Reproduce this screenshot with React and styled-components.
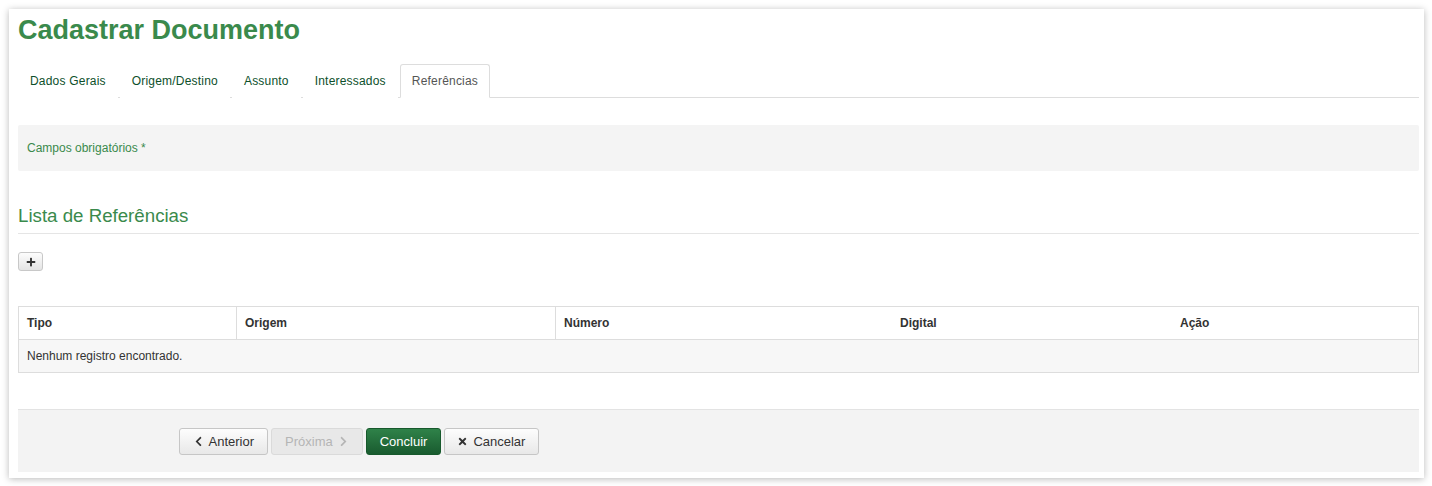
import React from 'react'
import styled, { createGlobalStyle } from 'styled-components'
import { FaChevronLeft, FaChevronRight, FaTimes, FaPlus } from 'react-icons/fa'

const GlobalStyle = createGlobalStyle`
  html, body {
    margin: 0;
    padding: 0;
    background: #fff;
  }
  body {
    font-family: "Liberation Sans", Arial, sans-serif;
    font-size: 12px;
    color: #333;
  }
`

const Page = styled.div`
  padding: 9px 8px 8px 9px;
`

const Card = styled.div`
  width: 1415px;
  box-sizing: border-box;
  background: #fff;
  padding: 9px 5px 6px 9px;
  box-shadow: 0 1px 7px rgba(0, 0, 0, 0.28);
`

const Title = styled.h1`
  margin: 0;
  height: 46px;
  font-size: 27px;
  line-height: 25px;
  font-weight: bold;
  color: #3a8a4c;
`

const Tabs = styled.ul`
  list-style: none;
  margin: 0;
  padding: 0;
  display: flex;
  border-bottom: 1px solid #ddd;
`

const Tab = styled.li`
  margin-right: 2px;
  margin-bottom: -1px;
  padding: 0 11px;
  height: 32px;
  line-height: 32px;
  font-size: 12px;
  letter-spacing: 0.2px;
  border: 1px solid ${p => (p.active ? '#ddd' : 'transparent')};
  border-bottom-color: ${p => (p.active ? '#fff' : 'transparent')};
  border-radius: 3px 3px 0 0;
  background: #fff;
  color: ${p => (p.active ? '#555' : '#0d4f2b')};
`

const Notice = styled.div`
  margin-top: 27px;
  height: 46px;
  display: flex;
  align-items: center;
  padding: 0 9px;
  background: #f4f4f4;
  border-radius: 2px;
  font-size: 12px;
  color: #3a8a4c;
`

const SectionTitle = styled.h2`
  margin: 34px 0 0 0;
  padding-bottom: 6px;
  font-size: 18.7px;
  line-height: 22px;
  font-weight: normal;
  color: #3a8a4c;
  border-bottom: 1px solid #e5e5e5;
`

const AddButton = styled.button`
  display: flex;
  align-items: center;
  justify-content: center;
  margin-top: 18px;
  width: 25px;
  height: 19px;
  padding: 0;
  border: 1px solid #c8c8c8;
  border-radius: 3px;
  background: linear-gradient(#fdfdfd, #e4e4e4);
  color: #333;
  font-size: 10px;
`

const Table = styled.table`
  margin-top: 35px;
  width: 100%;
  border-collapse: collapse;
  font-size: 12px;
  border: 1px solid #ddd;
`

const Th = styled.th`
  width: ${p => p.w}px;
  height: 32px;
  padding: 0 8px;
  text-align: left;
  font-weight: bold;
  color: #333;
  border-right: ${p => (p.line ? '1px solid #ddd' : 'none')};
  border-bottom: 1px solid #ddd;
`

const Td = styled.td`
  height: 32px;
  padding: 0 8px;
  background: #f7f7f7;
  color: #333;
`

const Footer = styled.div`
  margin-top: 36px;
  height: 62px;
  display: flex;
  align-items: center;
  gap: 3px;
  padding-left: 161px;
  background: #f3f3f3;
  border-top: 1px solid #e3e3e3;
`

const Button = styled.button`
  display: inline-flex;
  align-items: center;
  gap: 5px;
  height: 27px;
  padding: 0 ${p => p.pad || 13}px;
  font-family: "Liberation Sans", Arial, sans-serif;
  font-size: 13px;
  border-radius: 3px;
  border: 1px solid ${p => (p.primary ? '#17592c' : p.disabled ? '#dadada' : '#c6c6c6')};
  background: ${p =>
    p.primary
      ? 'linear-gradient(#2f8249, #195b2f)'
      : p.disabled
      ? '#e8e8e8'
      : 'linear-gradient(#fdfdfd, #e8e8e8)'};
  color: ${p => (p.primary ? '#fff' : p.disabled ? '#b5b5b5' : '#333')};
  svg {
    font-size: 11px;
  }
`

const App = () => (
  <Page>
    <GlobalStyle />
    <Card>
      <Title>Cadastrar Documento</Title>
      <Tabs>
        <Tab>Dados Gerais</Tab>
        <Tab>Origem/Destino</Tab>
        <Tab>Assunto</Tab>
        <Tab>Interessados</Tab>
        <Tab active>Referências</Tab>
      </Tabs>
      <Notice>Campos obrigatórios *</Notice>
      <SectionTitle>Lista de Referências</SectionTitle>
      <AddButton>
        <FaPlus />
      </AddButton>
      <Table>
        <thead>
          <tr>
            <Th w={201} line>Tipo</Th>
            <Th w={302} line>Origem</Th>
            <Th w={320}>Número</Th>
            <Th w={264}>Digital</Th>
            <Th>Ação</Th>
          </tr>
        </thead>
        <tbody>
          <tr>
            <Td colSpan={5}>Nenhum registro encontrado.</Td>
          </tr>
        </tbody>
      </Table>
      <Footer>
        <Button pad={12.5}>
          <FaChevronLeft />
          Anterior
        </Button>
        <Button disabled pad={13.5}>
          Próxima
          <FaChevronRight />
        </Button>
        <Button primary pad={12.5}>Concluir</Button>
        <Button pad={12.5}>
          <FaTimes />
          Cancelar
        </Button>
      </Footer>
    </Card>
  </Page>
)

export default App
